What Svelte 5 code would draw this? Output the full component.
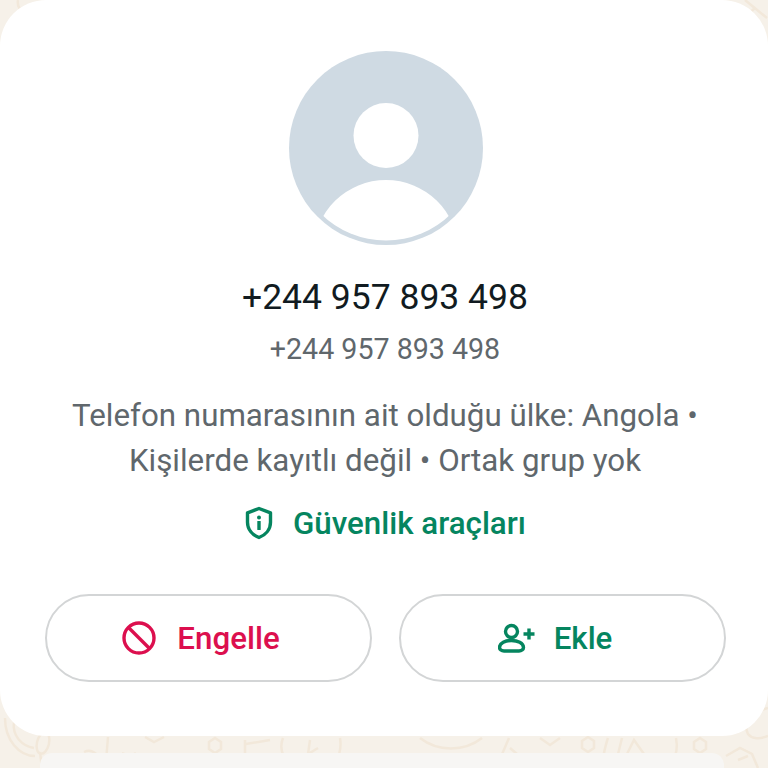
<script>
  const buttons = [
    { id: "block", label: "Engelle" },
    { id: "add", label: "Ekle" }
  ];
</script>

<div class="page">
  <svg class="wallpaper" viewBox="0 0 768 768" aria-hidden="true">
    <g fill="none" stroke="#f2e8da" stroke-width="2.5">
      <path d="M18 0c-1 6 2 10 6 12" />
      <path d="M745 0l22 18M755 8l-14 12 22 18" />
      <path d="M5 718c0 22 14 38 30 38" />
      <path d="M14 722c-2 14 8 24 20 26" />
      <ellipse cx="43" cy="743" rx="6" ry="11" transform="rotate(14 43 743)" />
      <path d="M40 752l2 16M84 752c4-2 8-2 12 2" />
      <path d="M108 737l-2 24M122 753c6 3 10 3 14 0M145 737l9 5 10-5" />
      <path d="M215 738l6 4v7l-6 4-6-4v-7z" />
      <path d="M245 740v22M270 740l-24 4" />
      <path d="M283 738c-4 10 0 20 8 28M340 738c2 12-2 20-6 28M310 740l-2 14 10-6" />
      <path d="M420 738c18 14 44 14 62 0" />
      <path d="M400 768c6-4 12-4 16 0" />
      <path d="M497 766l12-28M510 748l14 12" />
      <path d="M540 738l10 7 10-7" />
      <path d="M588 737l6 4v7l-6 4-6-4v-7z" />
      <path d="M608 738c-3 8-4 16-6 24M622 738c-2 8-4 16-6 24" />
      <path d="M626 756l8-16 10 14" />
      <path d="M676 738c2 10 0 18-4 24M664 760l4-2" />
      <path d="M700 738l6 4v7l-6 4-6-4v-7z" />
      <path d="M726 756l14-8 12 6 6 14M738 760l10-4" />
      <path d="M768 708c-16 4-26 14-20 26 3 4 10 6 20 2" />
    </g>
  </svg>

  <section class="card">
    <svg class="avatar" viewBox="0 0 194 194" aria-label="Profil fotoğrafı">
      <defs>
        <clipPath id="inner"><circle cx="97" cy="97" r="92.5" /></clipPath>
      </defs>
      <circle cx="97" cy="97" r="97" fill="#cfdae3" />
      <circle cx="97" cy="84.5" r="32.5" fill="#fff" />
      <ellipse cx="97" cy="200" rx="72" ry="71" fill="#fff" clip-path="url(#inner)" />
    </svg>

    <h1>+244 957 893 498</h1>
    <p class="phone">+244 957 893 498</p>
    <p class="info">
      Telefon numarasının ait olduğu ülke: Angola •<br />
      Kişilerde kayıtlı değil • Ortak grup yok
    </p>

    <div class="safety">
      <svg viewBox="0 0 30 34" width="30" height="34" aria-hidden="true">
        <path d="M15 2.500 3.500 6.800v9.400c0 7 4.700 12.700 11.500 15.300 6.800-2.600 11.500-8.300 11.500-15.300V6.800z" fill="none" stroke="currentColor" stroke-width="3.4" stroke-linejoin="round" />
        <circle cx="15" cy="11.500" r="2" fill="currentColor" />
        <rect x="13.300" y="15" width="3.400" height="9" rx="0.6" fill="currentColor" />
      </svg>
      <span>Güvenlik araçları</span>
    </div>

    <div class="actions">
      {#each buttons as btn (btn.id)}
        <button class="btn {btn.id}">
          {#if btn.id === "block"}
            <svg viewBox="0 0 34 34" width="34" height="34" aria-hidden="true">
              <circle cx="17" cy="17" r="15" fill="none" stroke="currentColor" stroke-width="3.4" />
              <path d="M6.500 6.500l21 21" stroke="currentColor" stroke-width="3.4" />
            </svg>
          {:else}
            <svg viewBox="0 0 38 30" width="38" height="30" aria-hidden="true">
              <circle cx="13.500" cy="8.500" r="6" fill="none" stroke="currentColor" stroke-width="3.400" />
              <path d="M6 28h15c2.500 0 4.500-1.500 4.500-3.500 0-4.500-6-7-12-7s-12 2.500-12 7c0 2 2 3.500 4.500 3.500z" fill="none" stroke="currentColor" stroke-width="3.400" stroke-linejoin="round" />
              <path d="M31 5.500v11M25.500 11h11" stroke="currentColor" stroke-width="3.400" />
            </svg>
          {/if}
          <span>{btn.label}</span>
        </button>
      {/each}
    </div>
  </section>

  <div class="bottom-bar"></div>
</div>

<style>
  :global(body) {
    margin: 0;
    background: #f6f1e9;
  }

  .page {
    position: relative;
    height: 768px;
    overflow: hidden;
    font-family: Roboto, "Noto Sans", sans-serif;
    display: flex;
    flex-direction: column;
  }

  .wallpaper {
    position: absolute;
    inset: 0;
    width: 768px;
    height: 768px;
  }

  .card {
    position: relative;
    height: 736px;
    box-sizing: border-box;
    padding: 51px 0 0 3px;
    background: #fff;
    border-radius: 46px;
    display: flex;
    flex-direction: column;
    align-items: center;
  }

  .avatar {
    width: 194px;
    height: 194px;
  }

  h1 {
    margin: 31px 0 0 -1px;
    font-size: 35.5px;
    line-height: 42px;
    font-weight: 400;
    color: #111b21;
  }

  .phone {
    margin: 13px 0 0 -1px;
    font-size: 28.6px;
    line-height: 36px;
    color: #60676c;
  }

  .info {
    margin: 26px 0 0 -1px;
    font-size: 31.3px;
    line-height: 45px;
    color: #60676c;
    text-align: center;
  }

  .safety {
    margin: 22px 0 0 -1px;
    display: flex;
    align-items: center;
    gap: 19px;
    height: 36px;
    color: #05855f;
    font-size: 31.3px;
    font-weight: 500;
  }

  .actions {
    margin-top: 53px;
    display: flex;
    gap: 27px;
  }

  .btn {
    width: 327px;
    height: 88px;
    box-sizing: border-box;
    padding: 0 15px 0 0;
    border: 2px solid #d3d5d6;
    border-radius: 44px;
    background: #fff;
    display: flex;
    align-items: center;
    justify-content: center;
    gap: 21px;
    font: 500 31.3px Roboto, "Noto Sans", sans-serif;
  }

  .btn.block {
    color: #dc0f4e;
  }

  .btn.add {
    gap: 18px;
    color: #05855f;
  }

  .bottom-bar {
    position: relative;
    margin: 17px 44px 0 40px;
    flex: 1;
    background: #f7f6f4;
    border-radius: 12px 12px 0 0;
  }
</style>
